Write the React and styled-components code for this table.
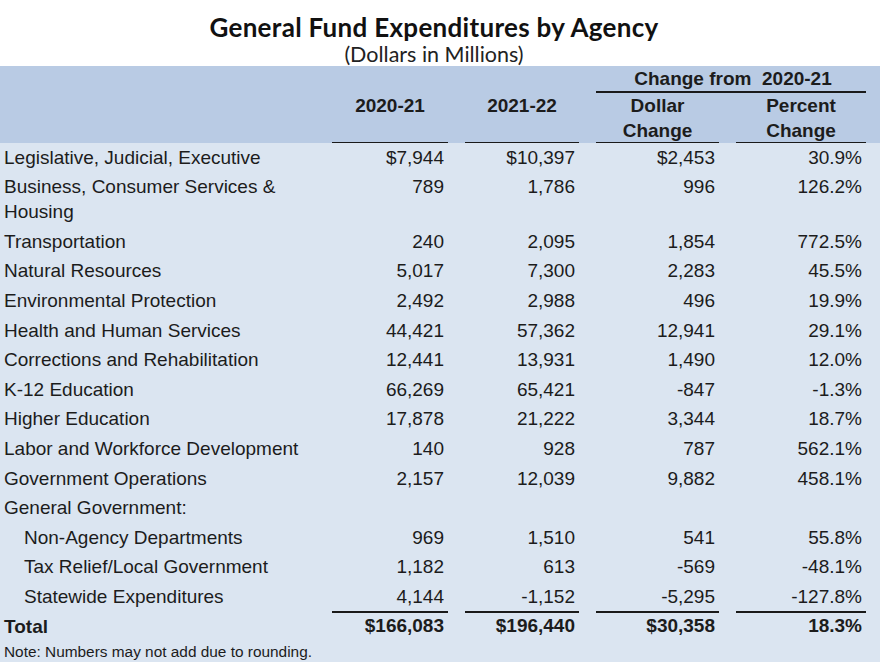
import React from "react";
import styled, { createGlobalStyle } from "styled-components";

const Global = createGlobalStyle`
  html, body { margin: 0; padding: 0; background: #ffffff; }
  body { font-family: "Liberation Sans", Arial, sans-serif; color: #1c1c1c; }
`;

const Page = styled.div`
  display: flex;
  flex-direction: column;
  height: 662px;
  width: 880px;
  overflow: hidden;
`;

const Titles = styled.div`
  display: flex;
  flex-direction: column;
  align-items: center;
  padding-top: 12px;
  padding-right: 12px;
  height: 66px;
  box-sizing: border-box;
`;

const Title = styled.h1`
  margin: 0;
  font-family: "Lato", "DejaVu Sans", sans-serif;
  font-weight: 700;
  font-size: 26px;
  line-height: 30px;
  letter-spacing: 0.3px;
  color: #111;
`;

const Subtitle = styled.div`
  font-family: "Lato", "DejaVu Sans", sans-serif;
  font-size: 21.5px;
  line-height: 24px;
  color: #222;
`;

const COLS = "311px 116px 114px 123px 130px";

const Header = styled.div`
  display: grid;
  grid-template-columns: ${COLS};
  grid-template-rows: 27px 25px 25px;
  column-gap: 17px;
  padding-left: 4px;
  background: #b9cbe4;
  font-weight: 700;
  font-size: 19px;
  height: 77px;
  box-sizing: border-box;
`;

const GroupHead = styled.div`
  grid-column: 4 / span 2;
  grid-row: 1;
  text-align: center;
  white-space: pre;
  line-height: 25px;
  border-bottom: 2px solid #1a1a1a;
  padding-left: 4px;
`;

const ColHead = styled.div`
  grid-column: ${(p) => p.$col};
  grid-row: 2 / span 2;
  text-align: center;
  line-height: 25px;
  border-bottom: 2.5px solid #1a1a1a;
  margin-bottom: -1px;
`;

const Body = styled.div`
  flex: 1;
  background: #dbe5f1;
  padding-top: 1px;
`;

const Row = styled.div`
  display: grid;
  grid-template-columns: ${COLS};
  column-gap: 17px;
  padding-left: 4px;
  font-size: 19px;
  line-height: 25px;
  padding-top: 0.6px;
  padding-bottom: 4px;
  font-weight: ${(p) => (p.$bold ? 700 : 400)};
`;

const Label = styled.div`
  padding-left: ${(p) => (p.$indent ? "20px" : "0")};
`;

const Num = styled.div`
  text-align: right;
  padding-right: 4px;
  border-top: ${(p) => (p.$rule ? "2.5px solid #1a1a1a" : "none")};
  margin-top: ${(p) => (p.$rule ? "-2.5px" : "0")};
`;

const Note = styled.div`
  padding-left: 4px;
  font-size: 15.4px;
  line-height: 18px;
`;

const rows = [
  ["Legislative, Judicial, Executive", "$7,944", "$10,397", "$2,453", "30.9%"],
  ["Business, Consumer Services & Housing", "789", "1,786", "996", "126.2%"],
  ["Transportation", "240", "2,095", "1,854", "772.5%"],
  ["Natural Resources", "5,017", "7,300", "2,283", "45.5%"],
  ["Environmental Protection", "2,492", "2,988", "496", "19.9%"],
  ["Health and Human Services", "44,421", "57,362", "12,941", "29.1%"],
  ["Corrections and Rehabilitation", "12,441", "13,931", "1,490", "12.0%"],
  ["K-12 Education", "66,269", "65,421", "-847", "-1.3%"],
  ["Higher Education", "17,878", "21,222", "3,344", "18.7%"],
  ["Labor and Workforce Development", "140", "928", "787", "562.1%"],
  ["Government Operations", "2,157", "12,039", "9,882", "458.1%"],
  ["General Government:", "", "", "", ""],
  ["Non-Agency Departments", "969", "1,510", "541", "55.8%", true],
  ["Tax Relief/Local Government", "1,182", "613", "-569", "-48.1%", true],
  ["Statewide Expenditures", "4,144", "-1,152", "-5,295", "-127.8%", true],
];

export default function App() {
  return (
    <Page>
      <Global />
      <Titles>
        <Title>General Fund Expenditures by Agency</Title>
        <Subtitle>(Dollars in Millions)</Subtitle>
      </Titles>
      <Header>
        <GroupHead>{"Change from  2020-21"}</GroupHead>
        <ColHead $col={2}>2020-21</ColHead>
        <ColHead $col={3}>2021-22</ColHead>
        <ColHead $col={4}>
          Dollar
          <br />
          Change
        </ColHead>
        <ColHead $col={5}>
          Percent
          <br />
          Change
        </ColHead>
      </Header>
      <Body>
        {rows.map(([label, a, b, c, d, indent]) => (
          <Row key={label}>
            <Label $indent={indent}>{label}</Label>
            <Num>{a}</Num>
            <Num>{b}</Num>
            <Num>{c}</Num>
            <Num>{d}</Num>
          </Row>
        ))}
        <Row $bold>
          <Label>Total</Label>
          <Num $rule>$166,083</Num>
          <Num $rule>$196,440</Num>
          <Num $rule>$30,358</Num>
          <Num $rule>18.3%</Num>
        </Row>
        <Note>Note: Numbers may not add due to rounding.</Note>
      </Body>
    </Page>
  );
}
